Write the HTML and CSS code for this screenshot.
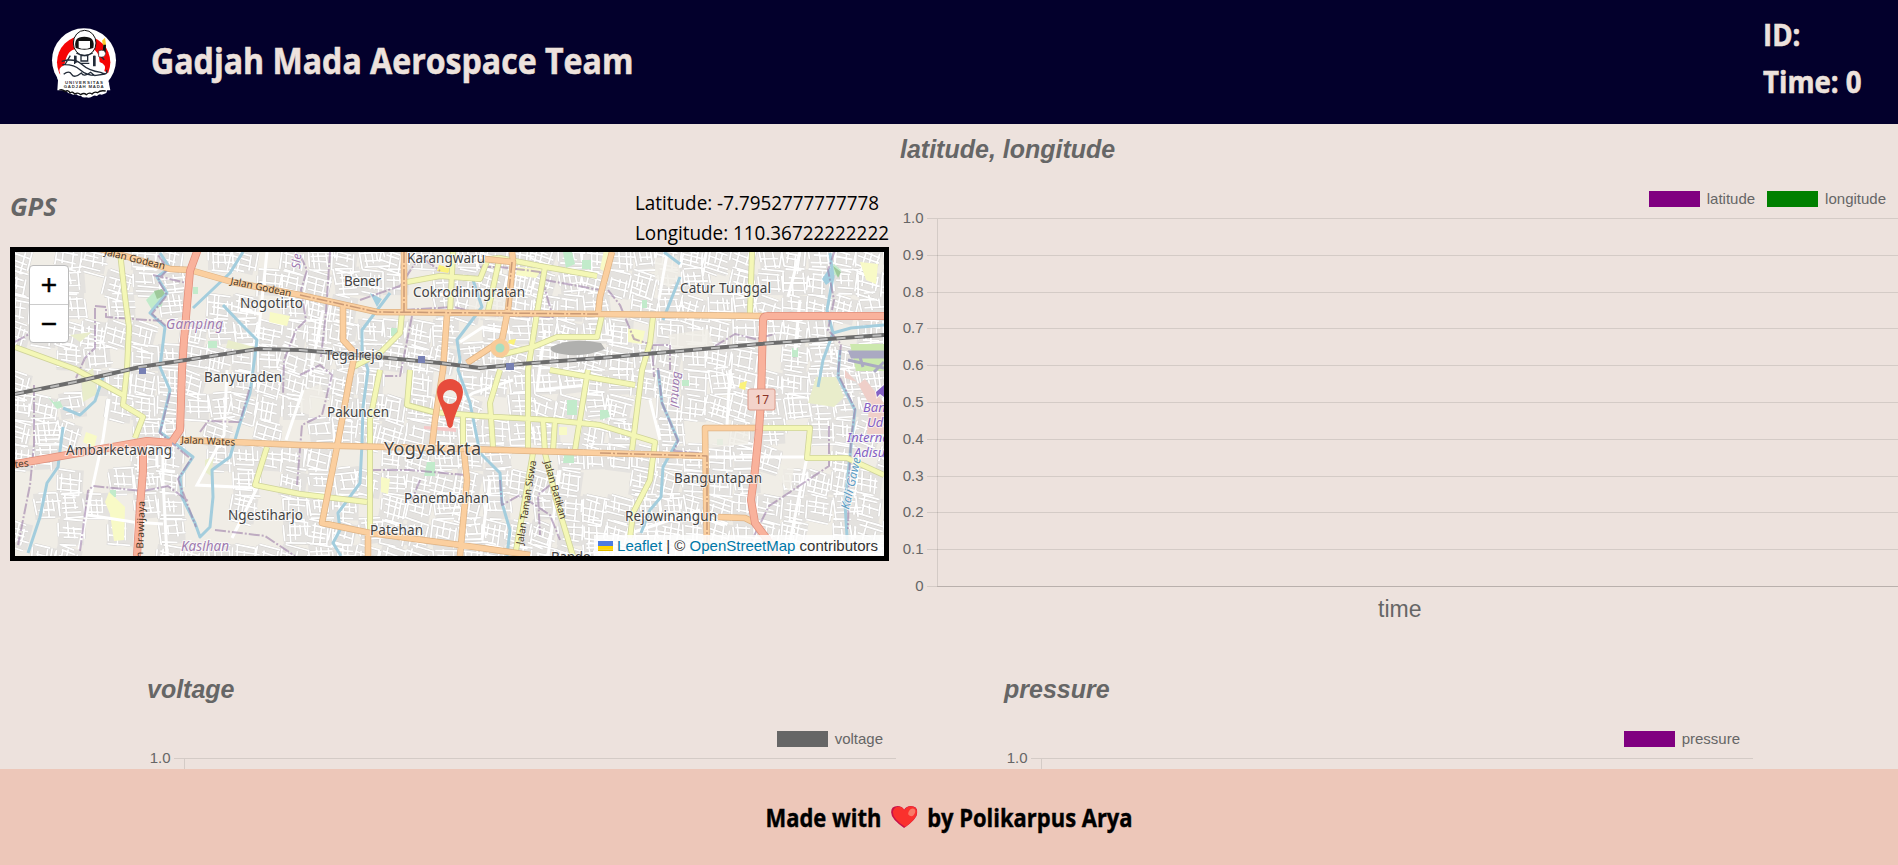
FILE: index.html
```html
<!DOCTYPE html>
<html lang="en">
<head>
<meta charset="utf-8">
<title>Gadjah Mada Aerospace Team</title>
<link rel="stylesheet" href="styles.css">
</head>
<body>
<header class="header">
  <div class="brand">
    <svg class="logo" viewBox="0 0 270 255">
      <circle cx="132" cy="121" r="96" fill="#fff"/>
      <path d="M56 188h152l-9 31q-8 4-14 5-8-4-14 4-8-4-13 1-8 7-20 3-9 2-15-4-9 1-14-5-10 3-16-2-8 1-14-7l-14-10z" fill="#fff"/>
      <circle cx="131" cy="127" r="80" fill="#f50505"/>
      <path d="M54 181q-7-12 7-18-10-20 12-27 8-45 32-48h52q20 4 22 38 22 8 14 27 20 8 12 28l6 30H52z" fill="#fff"/>
      <ellipse cx="134" cy="69" rx="34" ry="38" fill="#fff" stroke="#111" stroke-width="3"/>
      <path d="M107 84q-8-34 26-34t27 34q-27 11-53 0z" fill="#111"/>
      <path d="M116 83V63h34v20q-17 7-34 0z" fill="#fff"/>
      <path d="M109 99q24 15 49 0M91 107l-17 28m30-28v25m59-25v28m18-28l12 12M123 107h20v16h-20zM120 130h28M65 124q38-11 60 9t57 24q22 11 18-7M67 134q34-2 53 15t46 17M71 163q16-13 24 0t29-4q7 14 28-2l12 10 31-5" fill="none" stroke="#222b38" stroke-width="4"/>
      <path d="M106 107v22m57-22v32" stroke="#222b38" stroke-width="8"/>
      <path d="M186 62l9-9 3 21-7 8z" fill="#ffcf2d"/><path d="M190 74h8l-1 26-9-5z" fill="#111"/>
      <path d="M176 92q19-5 21 9-3 14-21 9z" fill="#fff" stroke="#333" stroke-width="2"/>
      <path d="M58 210q9-4 17 5 10-7 15 4 8-6 14 3 10-6 18 2 10-7 17 0 9-8 17-2 8-9 17-4 7-8 24-5" fill="none" stroke="#111" stroke-width="4"/>
      <text x="75" y="191" class="logo-text" textLength="114">UNIVERSITAS</text>
      <text x="71" y="204" class="logo-text" textLength="120">GADJAH MADA</text>
    </svg>
    <h1 class="brand-name">Gadjah Mada Aerospace Team</h1>
  </div>
  <div class="status"><div class="status-line">ID:</div><div class="status-line">Time: 0</div></div>
</header>

<main class="main">
  <div class="row">
    <section class="gps">
      <div class="gps-head">
        <h2 class="gps-title">GPS</h2>
        <div class="coords"><div>Latitude: -7.7952777777778</div><div>Longitude: 110.36722222222</div></div>
      </div>
      <div class="map">
        <svg class="tiles" viewBox="15 252 869 304">
          <defs>
            <path id="sec" d="M120 252l5 45 4 30-2 43-4 35 20 12-8 21M15 347l60 22 48 26M407 282l33-6 40 3 8-20 12-1 40 8 57 10M453 252l-3 61M500 256l-12 55M545 267l-8 46-9 57v50M402 313l-2 20-20 20-27 14M380 370l-10 50v110M410 370l-3 35 26 7 47 4 70 4 50 5 55 17-5 38-17 33-3 25M463 413v37M500 370l-10 33 3 44M528 420v30l5 3-18 103M543 420l2 33 12 50 16 53M555 420l-2 31M588 370l-13 80M550 370l50 9 35 6M653 317l-3 26-8 27-10 80M752 252l-2 61M763 428h47l-3 30h40l37 17M267 447l-12 38 45 9 67 8M500 355l33-8 24-10h40l5-22"/>
            <path id="pri" d="M90 246l80 23 20 1 42 12 68 13 77 17 223 2 163 2M404 252v60M447 315l-4 55-8 50-3 26M512 252l1 8M485 259l28 3-5 48-6 30-35 23M343 305v35l12 13-5 24-13 70-15 76 48 10 90 12 70 10M180 440l52 2 68 3 130 3 170 5 107 3M707 556l-2-128h55M464 452l3 28-7 76M612 252l-12 45-2 17M718 517l27 1 10 5M368 533v23"/>
            <path id="trunk" d="M198 249l-8 22-6 69-2 30-2 60-8 12M15 464l52-9 80-14 25 2M143 441v30l-3 35-3 50M884 316H768q-5 0-5 5l-2 79-2 30-4 40-4 30 4 23 12 16 12 20"/>
            <path id="railway" d="M15 394l60-12 65-15 118-18 42 1 67 6 73 7 40 5 40-4 80-6 160-14 124-9"/>
          </defs>
          <rect x="15" y="252" width="869" height="304" fill="#f0ede6"/>
          <g id="blocks"></g>
          <g id="streets"></g>
          <g fill="#c2ebcb"><path d="M146 300l8-8h10l-2 14-10 4zM208 341h9v7h-9zM391 328h6v8h-6zM563 252h9l3 12-9 4zM582 260h9v9h-9zM642 300h5v8h-5zM792 348h6v9h-6zM682 380h7v6h-7zM717 439h6v6h-6zM427 462h8v14h-11zM567 400h10v15h-10zM48 397l6 5 6-1 3 6-6 2zM564 455h10v8h-11zM600 410l8 0 2 7-10 3zM834 264l7 6-3 6-8-3zM110 490h6v7h-7zM193 287h5v7h-5z"/></g>
          <path d="M154 291l8-2 4 6-9 4zM833 266l8 6-3 6z" fill="#9ec99a"/>
          <g fill="#f8fac6"><path d="M109 492l16 15-1 33-10 1-4-27-5-12zM86 432l11 4-3 12-11-6zM270 312l20 4-3 10-18-4zM517 267l25 2-6 9-20-3zM628 328l17 3-3 13-14-2zM381 477l9 2-2 15-7-2zM559 427h8v8h-8zM860 262l18 2-2 20-10-4zM604 250l8 3-5 20-7-4z"/></g>
          <g fill="#e9edcb"><path d="M81 376l12-8 4 26-14 8zM228 340l30 8-18 2-14-2zM816 377h20l8 20-10 10-26-4zM205 460l9-4-3 20-6-4zM70 335l22-3-12 10z"/></g>
          <g fill="#f0ede6"><path d="M655 258l22-2 4 20-12 12-14-10zM300 392l20-8 8 18-14 14-14-4zM668 335l40-6 6 18-40 6zM710 430l40 0-2 14-40 4zM780 464l14 4-4 24-12-14zM470 290l40 8-8 24-34-6z" fill-opacity=".8"/></g>
          <path d="M822 279l8-12 4 12-8 6zM370 293l12 6-5 8z" fill="#a3cfe0"/>
          <path d="M850 344h34v27h-28z" fill="#cce8ae"/>
          <path d="M850 352h34v5h-32zM848 360l36 8M860 357l3 10M874 372l10-10" fill="#aaa9c2" stroke="#aaa9c2" stroke-width="3"/>
          <path d="M845 370l14 14 6-5 19 24v31h-17l2-30-12-22-12-4z" fill="#efcfc9"/>
          <path d="M551 347q20-10 50-4l4 6q-22 9-43 5-14-2-11-7z" fill="#b0b0ae"/>
          <g fill="#fbf27a"><path d="M439 265l12 3-3 5-11-2zM509 340l7-1-2 6-6-2zM740 383l7-2-2 9-6-2z"/></g>
          <path d="M424 426l32 2v4l-32-3z" fill="#f5c8c8"/>
          <g class="white-road"><path d="M109 399l-6 40-24 110M88 515l45 7 30 2M163 420v60l4 76M267 252l-10 95M240 310l20 4M227 370l-3 65-27 50 60 3-25 50M303 390l-17 50M460 342l23-15 30 6M323 310l-13 65M800 252l-12 45M667 254l-8 45M730 370l-3 55M650 400l10 40M625 535l75-25M707 457h100l-20 99M800 300l-5 50M463 400l10-7 40-13M545 330l-8 60 50-5M560 470l-12 86M490 480l-8 60"/></g>
          <g class="water">
            <path d="M160 253l10 15-13 9 10 16-17 20 15 14-5 40 10 23-10 42 33 25-13 20 2 20 13 26 5 14 10-10 3-30-1-27 18-13 10-34 10-30 7-53-17-17-17-18M63 427l-5 40-11 16-7 34-12 36M243 252l-13 21-37 35M390 293l-28 37v20l6 20-5 37-1 36-2 40-22 30 2 17-7 13 8 13M473 280l9 27-25 33 3 20-2 10 12 33 10 50 20 20 2 30 8 27-3 26M680 277l-17 43M664 252l16 12M830 253l3 24-6 33 6 23-10 27-5 27M833 333l18-5 33-3M840 350l-2 27 17 33-3 27-7 66 3 50M658 370l4 33 16 37-15 27-2 30-11 13-9 23M63 408l17 7 15-14 8-24"/>
          </g>
          <g class="bounds">
            <path d="M15 342l14-8 12-30 14-3M95 308l0 40-10 10-9 20M95 306l11 1v10l56 4M153 275l38 9M158 255l10 14-10 11 9 15-15 19 14 12M170 393l-10 40 31 26-13 20 18 48M300 255l7 15-6 20 5 30-10 10-12 30-1 35M330 252l-4 60-5 45M412 316l-12 60-15 0M404 310l50-3 30 8 70 2M360 300l40-14 20-30 20 15M480 267l20 0 40 5 12 42M545 280l55 10M608 290l12 15 14 34 18 6 2 32M653 345l17 0 0 25M715 346l20-12 20 5 20-5M835 250l-7 20 6 30-6 30 13 14-3 30 17 35-4 30-2 40-1 50M80 551l8-60 5-5 50 5 25-5 20 15M215 530l50 6 30 20M300 375l20-10 12 10-10 40-20 10-5 60M370 470l40 0 55 5M420 480l-8 20M500 480l2 25 18-10 30 20 10 25M550 485l-12 10 2 40M658 368l4 35 16 38-4 10 25 2M829 426v40l-60 40-20 40M200 432l8-11 32 1 10-35M34 385v60l-4 40-12 60"/>
          </g>
          <use href="#sec" class="sec-case"/><use href="#sec" class="sec"/>
          <use href="#pri" class="pri-case"/><use href="#pri" class="pri"/>
          <circle cx="500" cy="348" r="7" fill="#a7dfc1" stroke="#f8cb98" stroke-width="5"/>
          <use href="#trunk" class="trunk-case"/><use href="#trunk" class="trunk"/>
          <path class="bounds bounds-road" d="M300 295l77 17 223 2M404 252v60M600 453l107 3v90M512 262l-5 48"/>
          <use href="#railway" class="rail"/><use href="#railway" class="rail-dash"/>
          <path d="M139 368h7v6h-7zM418 356h7v7h-7zM506 363h8v7h-8z" fill="#7780b3"/>
          <rect x="748" y="389" width="27" height="21" rx="2" fill="#f3d3ca" stroke="#dc9a8a"/>
          <g class="label">
            <text x="755" y="404" textLength="14" class="shield">17</text>
            <text x="407" y="263" textLength="78">Karangwaru</text>
            <text x="344" y="286" textLength="37">Bener</text>
            <text x="413" y="297" textLength="112">Cokrodiningratan</text>
            <text x="240" y="308" textLength="63">Nogotirto</text>
            <text x="325" y="360" textLength="58">Tegalrejo</text>
            <text x="680" y="293" textLength="91">Catur Tunggal</text>
            <text x="204" y="382" textLength="78">Banyuraden</text>
            <text x="327" y="417" textLength="62">Pakuncen</text>
            <text x="384" y="455" textLength="97" class="city">Yogyakarta</text>
            <text x="66" y="455" textLength="106">Ambarketawang</text>
            <text x="404" y="503" textLength="85">Panembahan</text>
            <text x="370" y="535" textLength="53">Patehan</text>
            <text x="228" y="520" textLength="75">Ngestiharjo</text>
            <text x="674" y="483" textLength="88">Banguntapan</text>
            <text x="625" y="521" textLength="92">Rejowinangun</text>
            <text x="551" y="562" textLength="40">Bando</text>
          </g>
          <g class="district">
            <text x="166" y="329" textLength="57">Gamping</text>
            <text x="181" y="551" textLength="48">Kasihan</text>
            <text transform="translate(300 269)rotate(-86)" font-size="12">Sle</text>
            <text transform="translate(674 371)rotate(96)" textLength="36" font-size="12">Bantul</text>
          </g>
          <g class="street-name">
            <text transform="translate(104 255)rotate(13.5)" textLength="62">Jalan Godean</text>
            <text transform="translate(230 284)rotate(12)" textLength="62">Jalan Godean</text>
            <text transform="translate(181 443)rotate(3)" textLength="54">Jalan Wates</text>
            <text transform="translate(15 468)rotate(-7)" textLength="14">tes</text>
            <text transform="translate(143 558)rotate(-88)" textLength="57">n Brawijaya</text>
            <text transform="translate(523 545)rotate(-81)" textLength="85">Jalan Taman Siswa</text>
            <text transform="translate(544 462)rotate(74)" textLength="60">Jalan Batikan</text>
          </g>
          <text class="river-name" transform="translate(849 510)rotate(-77)" textLength="53">Kali Gawe</text>
          <g class="airport">
            <text x="863" y="412">Bandara</text><text x="867" y="427">Udara</text><text x="847" y="442">Internasional</text><text x="854" y="457">Adisucipto</text>
            <path d="M876 392l8-7v12l-4-3-3 3z"/>
          </g>
        </svg>
        <div class="zoom"><span class="zoom-btn">+</span><span class="zoom-btn">−</span></div>
        <svg class="pin" viewBox="0 0 26 49"><path fill-rule="evenodd" d="M13 0a13 13 0 0 0-13 13c0 9 8 19 10.500 34q2.500 4 5 0C18 32 26 22 26 13A13 13 0 0 0 13 0zm0 11a7 7 0 1 1 0 14 7 7 0 0 1 0-14z" fill="#e74c3c"/></svg>
        <div class="attribution"><svg class="flag" viewBox="0 0 12 8"><path fill="#4c7be1" d="M0 0h12v4H0z"/><path fill="#ffd500" d="M0 4h12v3H0z"/><path fill="#e0bc00" d="M0 7h12v1H0z"/></svg><span><a>Leaflet</a> | © <a>OpenStreetMap</a> contributors</span></div>
      </div>
    </section>
    <section class="chart chart-wide">
      <h2 class="chart-title">latitude, longitude</h2>
      <div class="legend"><i class="swatch purple"></i><span>latitude</span><i class="swatch green"></i><span>longitude</span></div>
      <svg class="plot" width="998" height="400" data-rows="11"></svg>
      <div class="axis-title">time</div>
    </section>
  </div>
  <div class="row row-lower">
    <section class="chart">
      <h2 class="chart-title">voltage</h2>
      <div class="legend"><i class="swatch gray"></i><span>voltage</span></div>
      <svg class="plot" width="749" height="30" data-rows="1"></svg>
    </section>
    <section class="chart">
      <h2 class="chart-title">pressure</h2>
      <div class="legend"><i class="swatch purple"></i><span>pressure</span></div>
      <svg class="plot" width="749" height="30" data-rows="1"></svg>
    </section>
  </div>
</main>

<footer class="footer">
  <div class="credit"><span>Made with</span>
  <svg class="heart" viewBox="0 0 75 66" preserveAspectRatio="none"><path d="M37 66Q0 39 0 19 0 0 19 0 31 0 37 11 44 0 56 0q19 0 19 19 0 20-38 47z" fill="#c8124a"/><path d="M41 63Q5 39 5 18 8 2 22 2q12 1 16 11Q44 1 57 1q17 1 17 18 0 19-33 44z" fill="#fa312d"/><ellipse cx="59" cy="19" rx="9" ry="12" transform="rotate(28 59 19)" fill="#f97a67"/></svg>
  <span>by Polikarpus Arya</span></div>
</footer>
<script src="app.js"></script>
</body>
</html>
```
FILE: styles.css
```css
* { box-sizing: border-box; }
body { margin: 0; height: 865px; display: flex; flex-direction: column; overflow: hidden; background: #ede2dd; font-family: "Open Sans", "Noto Sans", sans-serif; }
h1, h2 { margin: 0; }

.header { flex: none; height: 124px; padding: 0 36px 0 40px; display: flex; justify-content: space-between; background: #03002c; color: #ede2dd; }
.brand { display: flex; align-items: center; }
.logo { width: 90px; height: 85px; }
.logo-text { font: bold 13px "Liberation Sans", sans-serif; fill: #333; }
.brand-name { margin: -3px 0 0 21px; font-size: 36px; line-height: 50px; font-weight: 700; white-space: nowrap; transform: scaleX(.891); transform-origin: left; -webkit-text-stroke: .6px currentColor; }
.status { width: 99px; padding-top: 11px; font-size: 31px; font-weight: 700; line-height: 47px; white-space: nowrap; -webkit-text-stroke: .6px currentColor; }
.status-line { transform: scaleX(.89); transform-origin: left; }

.main { flex: 1; min-height: 0; overflow: hidden; }
.row { display: flex; height: 540px; }
.gps { flex: none; width: 879px; margin: 63px 11px 0 10px; }
.gps-head { display: flex; justify-content: space-between; height: 60px; }
.gps-title { color: #666; font-size: 25.500px; line-height: 38px; font-style: italic; }
.coords { width: 254px; padding-top: 1px; font-size: 20px; line-height: 30px; white-space: nowrap; color: #000; }
.coords div { transform: scaleX(.943); transform-origin: left; }
.map { position: relative; height: 314px; border: 5px solid #000; overflow: hidden; }
.tiles { display: block; width: 869px; height: 304px; }
.water path { fill: none; stroke: #a3cddd; stroke-width: 3; stroke-linejoin: round; }
.bounds { fill: none; stroke: #9c7fa8; stroke-width: 2; stroke-dasharray: 11 2 2 2; opacity: .6; stroke-linejoin: round; }
.bounds-road { stroke: #a8765c; stroke-width: 1.5; opacity: .6; }
.white-road { fill: none; stroke: #fff; stroke-width: 3; }
.sec, .sec-case, .pri, .pri-case, .trunk, .trunk-case, .rail, .rail-dash { fill: none; stroke-linejoin: round; }
.sec-case { stroke: #cfd39a; stroke-width: 6; }
.sec { stroke: #f4f7b6; stroke-width: 4.4; }
.pri-case { stroke: #dfb384; stroke-width: 6.5; }
.pri { stroke: #fbcf9f; stroke-width: 5; }
.trunk-case { stroke: #e08f7c; stroke-width: 8; }
.trunk { stroke: #f9b29c; stroke-width: 6.5; }
.rail { stroke: #6c6c6c; stroke-width: 4; }
.rail-dash { stroke: #bcbcbc; stroke-width: 2; stroke-dasharray: 9 9; }
.label, .district, .street-name, .airport, .river-name { font-family: "Noto Sans", sans-serif; paint-order: stroke; stroke: rgba(255,255,255,.65); stroke-width: 2px; }
.label { font-size: 13.500px; fill: #444; }
.label .shield { font-size: 12px; fill: #8a3327; stroke: none; }
.label .city { font-size: 18px; }
.district { font-size: 13.500px; font-style: italic; fill: #a07bb0; }
.street-name { font-size: 10px; fill: #4a3a2a; stroke: none; }
.river-name { font-size: 12px; fill: #5b9cc4; font-style: italic; }
.airport { font-size: 13px; font-style: italic; fill: #8461c4; }
.street-line-case { fill: none; stroke: #cfcdcb; stroke-width: 2.6; }
.street-line { fill: none; stroke: #fff; stroke-width: 1.8; }
.zoom { position: absolute; left: 14px; top: 13px; width: 40px; height: 78px; border: 1px solid #bbb; border-radius: 4px; background: #fff; overflow: hidden; }
.zoom-btn { display: block; height: 38px; font: 28px/38px "Liberation Sans", sans-serif; text-align: center; color: #000; -webkit-text-stroke: .5px #000; }
.zoom-btn + .zoom-btn { border-top: 1px solid #ccc; }
.pin { position: absolute; left: 422px; top: 127px; width: 26px; height: 49px; }
.attribution { position: absolute; right: 0; bottom: 0; height: 21px; padding: 0 6px 0 4px; display: flex; align-items: center; gap: 4px; background: rgba(255,255,255,.85); font: 15px/21px "Liberation Sans", sans-serif; color: #333; white-space: nowrap; }
.attribution a { color: #0078a8; }
.flag { width: 15px; height: 10px; }

.chart { flex: none; width: 749px; font-family: "Liberation Sans", Arial, sans-serif; color: #666; }
.chart-wide { width: 998px; }
.chart-title { padding-top: 10px; height: 67px; font-size: 25px; line-height: 30px; font-style: italic; }
.legend { height: 16px; display: flex; justify-content: flex-end; align-items: center; padding-right: 13px; font-size: 15px; line-height: 16px; }
.chart-wide .legend { padding-right: 12px; }
.swatch { width: 51px; height: 16px; margin: 0 7px 0 12px; }
.purple { background: #800080; }
.green { background: #008000; }
.gray { background: #666; }
.plot { display: block; font: 15px "Liberation Sans", Arial, sans-serif; fill: #666; }
.grid-line { stroke: rgba(0,0,0,.1); stroke-width: 1; }
.zero-line { stroke: rgba(0,0,0,.22); stroke-width: 1; }
.axis-title { margin: -13px 0 0 478px; font-size: 23px; line-height: 30px; }
.row-lower { padding-left: 147px; gap: 108px; }

.footer { flex: none; height: 96px; display: flex; justify-content: center; align-items: center; background: #edc7b9; color: #000; }
.credit { display: flex; align-items: center; justify-content: center; gap: 11px; font-size: 25px; line-height: 34px; font-weight: 700; white-space: nowrap; transform: scaleX(.878); -webkit-text-stroke: .4px #000; }
.heart { width: 30px; height: 22px; }
```
FILE: app.js
```js
const NS = 'http://www.w3.org/2000/svg';
function add(parent, tag, attrs, text) {
  const node = document.createElementNS(NS, tag);
  for (const key in attrs) node.setAttribute(key, attrs[key]);
  if (text) node.textContent = text;
  parent.appendChild(node);
}

// Chart grids: one horizontal line per tick and a left axis
document.querySelectorAll('.plot').forEach(plot => {
  const rows = +plot.dataset.rows, width = plot.getAttribute('width');
  for (let i = 0; i < rows; i++) {
    const y = Math.round(11 + i * 36.8) + 0.5;
    const last = i === 10;
    add(plot, 'line', { x1: 27, x2: last ? 37 : width, y1: y, y2: y, class: 'grid-line' });
    if (last) add(plot, 'line', { x1: 37, x2: width, y1: y, y2: y, class: 'zero-line' });
    add(plot, 'text', { x: 23.5, y: y + 4.5, 'text-anchor': 'end' }, last ? '0' : (1 - i / 10).toFixed(1));
  }
  add(plot, 'line', { x1: 37.5, x2: 37.5, y1: 12, y2: rows > 1 ? 379 : 30, class: 'grid-line' });
});

// Minor streets of the map: small neighbourhoods of roughly parallel lanes
let seed = 7;
const rnd = () => (seed = (seed * 16807) % 2147483647) / 2147483647;
let lanes = '';
const blocks = document.getElementById('blocks');
for (let y = 244; y < 560; y += 25) {
  for (let x = 8; x < 890; x += 25) {
    const dense = x > 280 ? 0.9 : 0.64;
    if (rnd() > dense) continue;
    const a = (rnd() - 0.3) * 0.45, c = Math.cos(a), s = Math.sin(a);
    const point = (u, v) => (x + u * c - v * s).toFixed(1) + ' ' + (y + u * s + v * c).toFixed(1);
    add(blocks, 'path', { d: 'M' + point(0, 0) + 'L' + point(26, 0) + 'L' + point(26, 26) + 'L' + point(0, 26) + 'z', fill: '#e4e2df' });
    for (let v = 0; v < 27; v += 4 + rnd() * 5) lanes += 'M' + point(rnd() * 6, v) + 'L' + point(17 + rnd() * 11, v + rnd() * 2);
    for (let u = 0; u < 27; u += 4 + rnd() * 7) lanes += 'M' + point(u, rnd() * 8) + 'L' + point(u + rnd() * 2, 15 + rnd() * 13);
  }
}
const streets = document.getElementById('streets');
add(streets, 'path', { d: lanes, class: 'street-line-case' });
add(streets, 'path', { d: lanes, class: 'street-line' });
```
